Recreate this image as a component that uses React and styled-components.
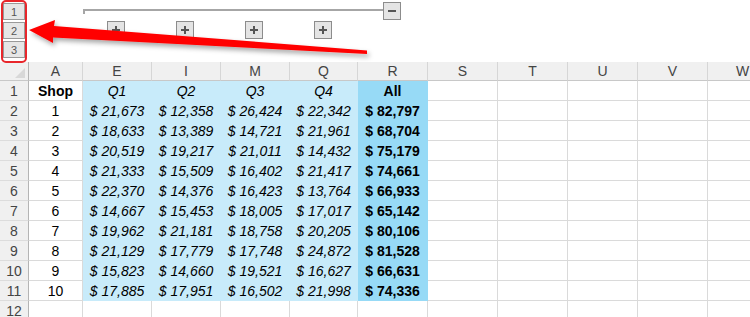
import React from "react";
import styled, { createGlobalStyle } from "styled-components";

const GlobalStyle = createGlobalStyle`
  html, body {
    margin: 0;
    padding: 0;
    background: #fff;
    overflow: hidden;
  }
  body {
    font-family: "Liberation Sans", Arial, sans-serif;
  }
`;

// row header + A + E I M Q + R S T U V W
const COLS = "29px 54px 69px 69px 69px 68px 70px 70px 70px 70px 70px 70px";

const fills = {
  light: "#c8ebfa",
  dark: "#97daf6",
};

const Sheet = styled.div`
  position: relative;
  width: 750px;
  height: 317px;
  overflow: hidden;
`;

const Outline = styled.div`
  display: grid;
  grid-template-columns: ${COLS};
  grid-template-rows: 21px 41px;
  height: 62px;
`;

const Levels = styled.div`
  grid-row: 1 / 3;
  grid-column: 1;
  display: flex;
  flex-direction: column;
  gap: 2px;
  padding: 3px 0 0 3px;
`;

const LevelButton = styled.div`
  box-sizing: border-box;
  width: 22px;
  height: 17px;
  border: 1px solid #9a9a9a;
  background: #e6e6e6;
  color: #555;
  font-size: 11px;
  display: flex;
  align-items: center;
  justify-content: center;
`;

const Bracket = styled.div`
  grid-row: 1;
  grid-column: 3 / 8;
  display: flex;
  align-items: flex-start;
  padding: 2px 27px 0 0;
`;

const BracketLine = styled.div`
  flex: 1;
  box-sizing: border-box;
  height: 5px;
  margin-top: 7px;
  border-top: 2px solid #a6a6a6;
  border-left: 2px solid #a6a6a6;
`;

const Toggle = styled.div`
  position: relative;
  box-sizing: border-box;
  width: 18px;
  height: 18px;
  border: 1px solid #8c8c8c;
  background: #e4e4e4;
  grid-row: ${(p) => p.$row || "auto"};
  grid-column: ${(p) => p.$col || "auto"};
  justify-self: center;
  align-self: start;
  margin-right: ${(p) => (p.$col ? "3px" : "0")};

  &::before,
  &::after {
    content: "";
    position: absolute;
    background: #555;
    left: 4px;
    top: 7px;
    width: 8px;
    height: 2px;
  }
  &::after {
    display: ${(p) => (p.$plus ? "block" : "none")};
    left: 7px;
    top: 4px;
    width: 2px;
    height: 8px;
  }
`;

const Grid = styled.div`
  display: grid;
  grid-template-columns: ${COLS};
  grid-auto-rows: 20px;
  grid-template-rows: 19px;
`;

const HeadCell = styled.div`
  box-sizing: border-box;
  background: #f0f0f0;
  border-right: 1px solid ${(p) => (p.$side ? "#b4b4b4" : "#d6d6d6")};
  border-bottom: 1px solid ${(p) => (p.$side ? "#dcdcdc" : "#c8c8c8")};
  color: #444;
  font-size: 14px;
  display: flex;
  align-items: center;
  justify-content: center;
  white-space: nowrap;
`;

const Corner = styled(HeadCell)`
  justify-content: flex-end;
  align-items: flex-end;
  padding: 0 3px 2px 0;
  border-right-color: #b4b4b4;
`;

const CornerMark = styled.span`
  width: 10px;
  height: 10px;
  background: #d8d8d8;
  clip-path: polygon(100% 0, 100% 100%, 0 100%);
`;

const Cell = styled.div`
  box-sizing: border-box;
  background: ${(p) => (p.$fill ? fills[p.$fill] : "#fff")};
  border-right: 1px solid ${(p) => (p.$fill ? fills[p.$fill] : "#dadada")};
  border-bottom: 1px solid ${(p) => (p.$fill ? fills[p.$fill] : "#dadada")};
  color: #000;
  font-size: 14px;
  font-style: ${(p) => (p.$italic ? "italic" : "normal")};
  font-weight: ${(p) => (p.$bold ? 700 : 400)};
  display: flex;
  align-items: center;
  justify-content: center;
  white-space: nowrap;
`;

const Highlight = styled.div`
  position: absolute;
  left: 1px;
  top: 0;
  width: 26px;
  height: 63px;
  box-sizing: border-box;
  border: 2px solid #e8262b;
  border-radius: 5px;
  pointer-events: none;
`;

const Arrow = styled.svg`
  position: absolute;
  left: 0;
  top: 0;
  pointer-events: none;
`;

const letters = ["A", "E", "I", "M", "Q", "R", "S", "T", "U", "V", "W"];

const data = [
  [21673, 12358, 26424, 22342, 82797],
  [18633, 13389, 14721, 21961, 68704],
  [20519, 19217, 21011, 14432, 75179],
  [21333, 15509, 16402, 21417, 74661],
  [22370, 14376, 16423, 13764, 66933],
  [14667, 15453, 18005, 17017, 65142],
  [19962, 21181, 18758, 20205, 80106],
  [21129, 17779, 17748, 24872, 81528],
  [15823, 14660, 19521, 16627, 66631],
  [17885, 17951, 16502, 21998, 74336],
];

const money = (n) => "$ " + n.toLocaleString("en-US");

const blanks = (key) =>
  [0, 1, 2, 3, 4].map((i) => <Cell key={key + "-b" + i} />);

export default function App() {
  return (
    <Sheet>
      <GlobalStyle />
      <Outline>
        <Levels>
          <LevelButton>1</LevelButton>
          <LevelButton>2</LevelButton>
          <LevelButton>3</LevelButton>
        </Levels>
        <Bracket>
          <BracketLine />
          <Toggle />
        </Bracket>
        {[3, 4, 5, 6].map((c) => (
          <Toggle key={c} $plus $row={2} $col={c} />
        ))}
      </Outline>

      <Grid>
        <Corner>
          <CornerMark />
        </Corner>
        {letters.map((l) => (
          <HeadCell key={l}>{l}</HeadCell>
        ))}

        <HeadCell $side>1</HeadCell>
        <Cell $bold>Shop</Cell>
        {["Q1", "Q2", "Q3", "Q4"].map((q) => (
          <Cell key={q} $fill="light" $italic>
            {q}
          </Cell>
        ))}
        <Cell $fill="dark" $bold>
          All
        </Cell>
        {blanks("h")}

        {data.map((row, i) => (
          <React.Fragment key={i}>
            <HeadCell $side>{i + 2}</HeadCell>
            <Cell>{i + 1}</Cell>
            {row.slice(0, 4).map((v, j) => (
              <Cell key={j} $fill="light" $italic>
                {money(v)}
              </Cell>
            ))}
            <Cell $fill="dark" $bold>
              {money(row[4])}
            </Cell>
            {blanks("r" + i)}
          </React.Fragment>
        ))}

        <HeadCell $side>12</HeadCell>
        <Cell />
        <Cell />
        <Cell />
        <Cell />
        <Cell />
        <Cell />
        {blanks("last")}
      </Grid>

      <Highlight />
      <Arrow width="750" height="80" viewBox="0 0 750 80">
        <defs>
          <filter id="shadow" x="-10%" y="-50%" width="120%" height="200%">
            <feDropShadow dx="2" dy="3" stdDeviation="2.5" floodColor="#000" floodOpacity="0.35" />
          </filter>
        </defs>
        <polygon
          points="29,30 55,20 54,26 367,50.4 367,54 53,37.4 53,43"
          fill="#ff0000"
          filter="url(#shadow)"
        />
      </Arrow>
    </Sheet>
  );
}
